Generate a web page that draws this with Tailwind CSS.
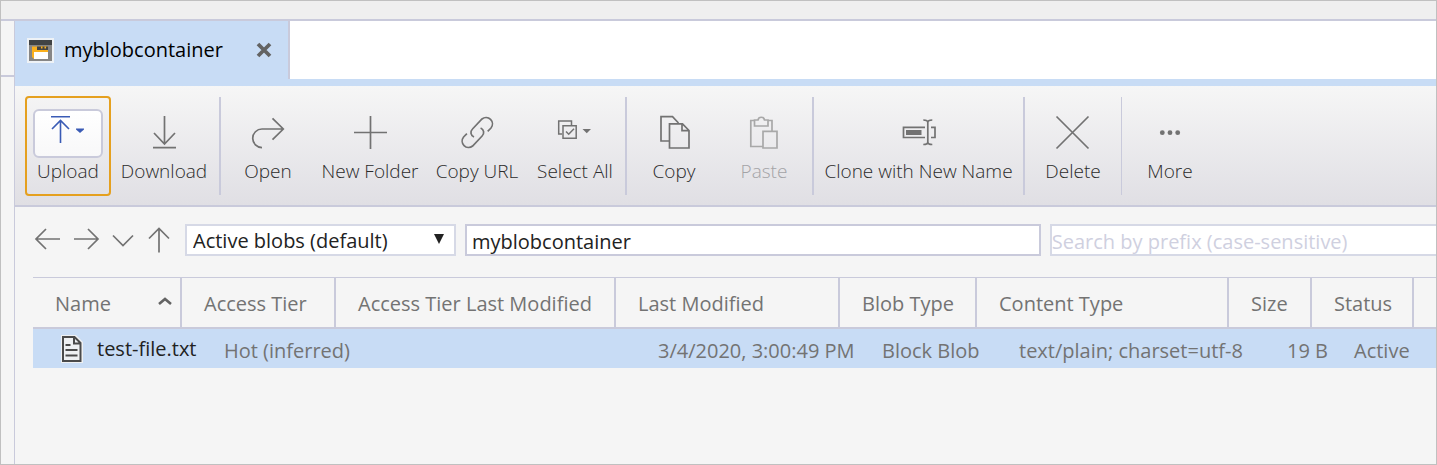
<!DOCTYPE html>
<html lang="en">
<head>
<meta charset="utf-8">
<title>myblobcontainer</title>
<script src="https://cdn.jsdelivr.net/npm/@tailwindcss/browser@4"></script>
</head>
<body class="flex h-screen flex-col overflow-hidden border border-[#c0c0c0] bg-[#f5f5f5] font-['Open_Sans','Noto_Sans',sans-serif] text-[20px] leading-6 text-[#2b2b2b]">
  <header class="h-5 shrink-0 border-b-2 border-[#c9cadb] bg-[#efefef]"></header>
  <div class="flex min-h-0 flex-1">
    <aside class="w-3.5 shrink-0 border-r border-[#c9cadb]">
      <div class="h-14 border-b-2 border-[#c9cadb]"></div>
    </aside>
    <main class="flex min-w-0 flex-1 flex-col">
      <!-- Tab strip -->
      <div class="flex shrink-0 border-b-[7px] border-[#c8dcf5] bg-white">
        <div class="flex h-[58px] items-center border-r-2 border-[#c9cadb] bg-[#c8dcf5] pr-4 pl-3">
          <svg class="h-[25px] w-[27px]" viewBox="0 0 27 25" aria-hidden="true">
            <rect width="27" height="25" fill="#eef2f6"/>
            <rect x="2" y="2" width="23" height="21" fill="#868686"/>
            <rect x="2" y="2" width="23" height="5" fill="#404345"/>
            <path d="M5 8.500h16v12.500h-14l-2-2z" fill="#fbb01c"/>
            <rect x="10" y="8.500" width="11" height="3.500" fill="#444"/>
            <rect x="14" y="8.500" width="1.500" height="2" fill="#fbb01c"/>
            <rect x="17.500" y="8.500" width="1.500" height="2" fill="#fbb01c"/>
            <rect x="7" y="14" width="14" height="7" fill="#fff"/>
          </svg>
          <a href="#" class="w-[202px] pl-2.5 font-medium text-black">myblobcontainer</a>
          <button type="button" aria-label="Close tab" class="flex size-4 items-center justify-center">
            <svg class="size-4" viewBox="0 0 16 16" fill="none" stroke="#636363" stroke-width="3.800"><path d="M2 2l12 12M14 2L2 14"/></svg>
          </button>
        </div>
      </div>

      <!-- Toolbar -->
      <div role="toolbar" class="flex shrink-0 border-b-2 border-[#c9cadb] bg-linear-to-b from-[#f6f6f6] to-[#e0dfe4] pt-2.5 pb-[9px] pl-2.5 text-[19px] leading-[26px] font-light">
        <button type="button" class="flex h-[100px] w-[86px] flex-col items-center rounded-sm border-2 border-[#e5a01f] pt-[11px]">
          <span class="flex h-[49px] w-[70px] rounded-md border-2 border-[#c9cadb] bg-linear-to-b from-white to-[#f8f8f9]">
            <svg class="h-[45px] w-[66px]" viewBox="0 0 66 45" fill="none" stroke="#3a5bb5" stroke-width="1.600" aria-hidden="true"><path d="M16 5.700h19M25.500 32V9.500M17 18l8.500-8.500L34 18"/><path d="M41 17.500h8v1L45 22l-4-3.500z" fill="#3a5bb5" stroke="none"/></svg>
          </span>
          <span>Upload</span>
        </button>
        <button type="button" class="mr-0.5 flex h-[100px] w-[106px] flex-col items-center whitespace-nowrap border-2 border-transparent pt-[11px]">
          <svg class="h-[49px] w-[50px] shrink-0" viewBox="0 0 50 49" fill="none" stroke="#727272" stroke-width="1.700" aria-hidden="true"><path d="M25.500 7v28M15 24l10.500 11L36 24M14 38.700h23"/></svg>
          <span>Download</span>
        </button>
        <div class="mt-px h-[98px] w-0.5 bg-[#c9cadb]"></div>
        <button type="button" class="flex h-[100px] w-[94px] flex-col items-center whitespace-nowrap border-2 border-transparent pt-[11px]">
          <svg class="h-[49px] w-[50px] shrink-0" viewBox="0 0 50 49" fill="none" stroke="#727272" stroke-width="1.700" aria-hidden="true"><path d="M40 20H19a9.300 9.300 0 0 0 0 18.600M29.500 9.300L40.300 20 29.500 30.700"/></svg>
          <span>Open</span>
        </button>
        <button type="button" class="flex h-[100px] w-[110px] flex-col items-center whitespace-nowrap border-2 border-transparent pt-[11px]">
          <svg class="h-[49px] w-[50px] shrink-0" viewBox="0 0 50 49" fill="none" stroke="#727272" stroke-width="1.700" aria-hidden="true"><path d="M25.500 7v33M9 23.500h33"/></svg>
          <span>New Folder</span>
        </button>
        <button type="button" class="flex h-[100px] w-[104px] flex-col items-center whitespace-nowrap border-2 border-transparent pt-[11px]">
          <svg class="h-[49px] w-[50px] shrink-0" viewBox="0 0 50 49" fill="none" stroke="#727272" stroke-width="1.700" aria-hidden="true"><path d="M22 28C18.500 26.500 18 22.500 20.500 20L30 10A6.400 6.400 0 0 1 39 19L35.700 22.300M28.600 19C32.100 20.500 32.600 24.500 30.100 27L20.600 37A6.400 6.400 0 0 1 11.600 28L14.900 24.700"/></svg>
          <span>Copy URL</span>
        </button>
        <button type="button" class="mr-1 flex h-[100px] w-[92px] flex-col items-center whitespace-nowrap border-2 border-transparent pt-[11px]">
          <svg class="h-[49px] w-[50px] shrink-0" viewBox="0 0 50 49" fill="none" stroke="#727272" stroke-width="1.500" aria-hidden="true"><path d="M12 25H8.700V12H21.500V16M13 16.700h13.200v12.500H13zM16 22.500l2.700 2.700 5.300-5.500"/><path d="M32.500 20h8.500l-4.250 4.300z" fill="#727272" stroke="none"/></svg>
          <span>Select All</span>
        </button>
        <div class="mt-px h-[98px] w-0.5 bg-[#c9cadb]"></div>
        <button type="button" class="flex h-[100px] w-[94px] flex-col items-center whitespace-nowrap border-2 border-transparent pt-[11px]">
          <svg class="h-[49px] w-[50px] shrink-0" viewBox="0 0 50 49" fill="none" stroke="#727272" stroke-width="1.700" aria-hidden="true"><path d="M20 32H12V7.700H23.500L29.500 14M20.500 14.800H33.500L40 21.500V39H20.500zM33 15V21.700H40"/></svg>
          <span>Copy</span>
        </button>
        <button type="button" disabled class="mr-[5px] flex h-[100px] w-[86px] flex-col items-center whitespace-nowrap border-2 border-transparent pt-[11px] text-[#a3a3a6]">
          <svg class="h-[49px] w-[50px] shrink-0" viewBox="0 0 50 49" fill="none" stroke="#a8a8a8" stroke-width="1.700" aria-hidden="true"><path d="M23.500 37.500H11.800V11.500H15.500M29 11.500H33V22M15.500 11V17H29V11H25.500A3.300 3.300 0 0 0 19 11zM24 22.300h14V39H24z"/></svg>
          <span>Paste</span>
        </button>
        <div class="mt-px h-[98px] w-0.5 bg-[#c9cadb]"></div>
        <button type="button" class="flex h-[100px] w-[209px] flex-col items-center whitespace-nowrap border-2 border-transparent pt-[11px]">
          <svg class="h-[49px] w-[50px] shrink-0" viewBox="0 0 50 49" fill="none" stroke="#727272" stroke-width="1.700" aria-hidden="true"><path d="M31 18.300H9.500V28.500H31M37 18.300H41V28.500H37M33.800 13.500V33M29.300 11C32 11 33.800 11.500 33.800 13.500 33.800 11.500 35.600 11 38.300 11M29.300 35.500C32 35.500 33.800 35 33.800 33 33.800 35 35.600 35.500 38.300 35.500"/><path d="M12 21h15.500v5H12z" fill="#727272" stroke="none"/></svg>
          <span>Clone with New Name</span>
        </button>
        <div class="mt-px h-[98px] w-0.5 bg-[#c9cadb]"></div>
        <button type="button" class="flex h-[100px] w-24 flex-col items-center whitespace-nowrap border-2 border-transparent pt-[11px]">
          <svg class="h-[49px] w-[50px] shrink-0" viewBox="0 0 50 49" fill="none" stroke="#727272" stroke-width="1.700" aria-hidden="true"><path d="M8.500 7.500l32 32M40.500 7.500l-32 32"/></svg>
          <span>Delete</span>
        </button>
        <div class="mt-px h-[98px] w-px bg-[#c9cadb]"></div>
        <button type="button" class="flex h-[100px] w-24 flex-col items-center whitespace-nowrap border-2 border-transparent pt-[11px]">
          <svg class="h-[49px] w-[50px] shrink-0" viewBox="0 0 50 49" fill="#727272" aria-hidden="true"><circle cx="17.300" cy="23.700" r="2.400"/><circle cx="25" cy="23.700" r="2.400"/><circle cx="32.700" cy="23.700" r="2.400"/></svg>
          <span>More</span>
        </button>
      </div>

      <!-- Navigation -->
      <div class="flex shrink-0 overflow-hidden pt-[17px] pb-[21px] pl-3.5">
        <button type="button" aria-label="Back" class="flex h-8 w-[38px] items-center justify-center"><svg class="h-8 w-7" viewBox="0 0 28 32" fill="none" stroke="#727272" stroke-width="1.700"><path d="M26 15H2M12 5l-10 10 10 10"/></svg></button>
        <button type="button" aria-label="Forward" class="flex h-8 w-[38px] items-center justify-center"><svg class="h-8 w-7" viewBox="0 0 28 32" fill="none" stroke="#727272" stroke-width="1.700"><path d="M2 15h24M16 5l10 10-10 10"/></svg></button>
        <button type="button" aria-label="History" class="flex h-8 w-9 items-center justify-center"><svg class="h-8 w-7" viewBox="0 0 28 32" fill="none" stroke="#727272" stroke-width="1.700"><path d="M4 11.500l10 10 10-10"/></svg></button>
        <button type="button" aria-label="Up" class="flex h-8 w-9 items-center justify-center"><svg class="h-8 w-7" viewBox="0 0 28 32" fill="none" stroke="#727272" stroke-width="1.700"><path d="M14 28.500v-24M4 14.500l10-10 10 10"/></svg></button>
        <div class="relative ml-2 w-[271px] shrink-0">
          <select aria-label="Blob view" class="h-8 w-full appearance-none border-2 border-[#d6d9e6] bg-white pt-0.5 pl-1.5 text-[#222]">
            <option>Active blobs (default)</option>
          </select>
          <svg class="pointer-events-none absolute top-2.5 right-3 h-2.5 w-2.5" viewBox="0 0 10 10" fill="#222" aria-hidden="true"><path d="M0 0h10L5 10z"/></svg>
        </div>
        <input aria-label="Path" value="myblobcontainer" class="ml-[9px] h-8 w-0 flex-[576] border-2 border-[#c9cadb] bg-white px-[5px] pt-0.5 text-[#222]">
        <input aria-label="Search" placeholder="Search by prefix (case-sensitive)" class="ml-[9px] h-8 w-0 flex-[394] border-2 border-r-0 border-[#d6d9e6] bg-white pt-0.5 placeholder:text-[#cfd0df]">
      </div>

      <!-- Blob list -->
      <div class="min-h-0 flex-1 overflow-hidden pl-[18px]">
        <table class="w-full table-fixed border-separate border-spacing-0 text-left whitespace-nowrap text-[#737373]">
          <colgroup>
            <col class="w-[149px]"><col class="w-[154px]"><col class="w-[280px]"><col class="w-[224px]"><col class="w-[137px]"><col class="w-[252px]"><col class="w-[83px]"><col class="w-[102px]"><col>
          </colgroup>
          <thead>
            <tr class="h-[52px] *:border-t *:border-r-2 *:border-b-2 *:border-[#c9cadb] *:p-0 *:pt-0.5 *:pl-[22px] *:font-normal">
              <th scope="col" aria-sort="ascending">
                <span class="flex items-center justify-between pr-[7px]">Name
                  <svg class="h-4 w-4" viewBox="0 0 16 16" fill="none" stroke="#636363" stroke-width="2.600" aria-hidden="true"><path d="M2 8l6-5 6 5"/></svg>
                </span>
              </th>
              <th scope="col">Access Tier</th>
              <th scope="col">Access Tier Last Modified</th>
              <th scope="col">Last Modified</th>
              <th scope="col">Blob Type</th>
              <th scope="col">Content Type</th>
              <th scope="col">Size</th>
              <th scope="col">Status</th>
              <td class="border-r-0!"></td>
            </tr>
          </thead>
          <tbody>
            <tr class="h-[39px] bg-[#c8dcf5] *:p-0 *:pt-1 *:pl-[42px]">
              <td class="pt-0! pl-[27px]!">
                <a href="#" class="flex items-center gap-3.5 text-[#222]">
                  <svg class="h-7 w-[23px] shrink-0" viewBox="0 0 23 28" fill="none" stroke="#4a4a4a" stroke-width="2" aria-hidden="true"><path d="M1 0h15l7 7v21H1z" fill="#eef0f2" stroke="none"/><path d="M3 2h11.500l6 6v18H3zM14 2v6.500h6.500M5.500 10h5M5.500 15h12M5.500 20.500h12"/></svg>
                  test-file.txt
                </a>
              </td>
              <td>Hot (inferred)</td>
              <td></td>
              <td>3/4/2020, 3:00:49 PM</td>
              <td>Block Blob</td>
              <td>text/plain; charset=utf-8</td>
              <td><div class="flex w-[57px] justify-end">19 B</div></td>
              <td>Active</td>
              <td></td>
            </tr>
          </tbody>
        </table>
      </div>
    </main>
  </div>
</body>
</html>
